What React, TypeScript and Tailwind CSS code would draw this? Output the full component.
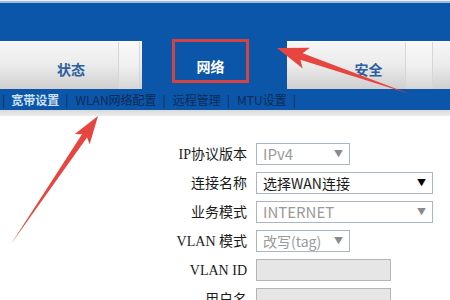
function arrowPoints(tx: number, ty: number, px: number, py: number, headLen: number, headW: number, neckW: number, notch: number) {
  const dx = px - tx;
  const dy = py - ty;
  const len = Math.hypot(dx, dy);
  const ux = dx / len;
  const uy = dy / len;
  const nx = -uy;
  const ny = ux;
  const bx = px - ux * headLen;
  const by = py - uy * headLen;
  const wx = bx - ux * notch;
  const wy = by - uy * notch;
  const pts = [
    [px, py],
    [wx + nx * headW, wy + ny * headW],
    [bx + nx * neckW, by + ny * neckW],
    [tx, ty],
    [bx - nx * neckW, by - ny * neckW],
    [wx - nx * headW, wy - ny * headW],
  ];
  return pts.map((p) => p.map((v) => v.toFixed(1)).join(",")).join(" ");
}

function Tab({ label, className, bandClass }: { label: string; className: string; bandClass: string }) {
  return (
    <div
      className={`relative flex h-full items-center justify-center border-t border-white bg-gradient-to-b from-[#f6f6f6] via-[#ebebeb] to-[#cfcfcf] pt-[8px] ${className}`}
    >
      <div className={`absolute top-0 h-full border-x border-x-[#d6d6d6] bg-gradient-to-b from-[#f9f9f9] via-[#f0f0f0] to-[#d6d6d6] ${bandClass}`} />
      <span className="relative text-[14px] font-bold text-[#2d5f9e]">{label}</span>
    </div>
  );
}

function Caret({ dark }: { dark?: boolean }) {
  return (
    <span className={`text-[9px] ${dark ? "text-black" : "text-[#8a8a8a]"}`}>▼</span>
  );
}

function Row({ label, children }: { label: string; children: React.ReactNode }) {
  return (
    <div className="flex h-[22px] items-center">
      <div className="w-[248px] pr-[1px] text-right text-[14px] text-[#1a1a1a] [font-family:'Liberation_Serif','Noto_Sans_CJK_SC',serif]">
        {label}
      </div>
      <div className="ml-[8px] flex h-full">{children}</div>
    </div>
  );
}

export default function App() {
  const nav = ["WLAN网络配置", "远程管理", "MTU设置"];
  return (
    <div className="relative h-[300px] w-[450px] overflow-hidden bg-white [font-family:'Noto_Sans_CJK_SC',sans-serif]">
      <div className="h-[1px] bg-[#eef2f6]" />
      <div className="h-[2px] bg-[#9dbde0]" />
      <div className="flex h-[86px] flex-col justify-end bg-[#0b56a8]">
        <div className="flex h-[48px] items-start">
          <Tab label="状态" className="w-[142px]" bandClass="left-[118px] w-[22px]" />
          <div className="ml-[30px] mt-[-2px] flex h-[44px] w-[77px] items-center justify-center border-[3px] border-[#d4433f] pt-[10px]">
            <span className="text-[14px] font-bold text-white">网络</span>
          </div>
          <Tab label="安全" className="ml-[38px] flex-1" bandClass="left-[118px] w-[28px]" />
        </div>
      </div>
      <div className="flex h-[21px] items-center gap-[6px] bg-[#0b56a8] pl-[2px] text-[12px] text-[#0d2b57]">
        <span>|</span>
        <span className="font-bold text-[#cfe0f3]">宽带设置</span>
        {nav.map((n) => (
          <span key={n} className="flex gap-[7px]">
            <span>|</span>
            <span>{n}</span>
          </span>
        ))}
        <span>|</span>
      </div>
      <div className="h-[6px] bg-gradient-to-b from-[#d9d9d9] to-[#eeeeee]" />

      <div className="mt-[27px] flex flex-col gap-[7px]">
        <Row label="IP协议版本">
          <div className="flex w-[94px] items-center justify-between border border-[#a9b6c4] px-[6px] text-[15px] text-[#9a9a9a]">
            <span>IPv4</span>
            <Caret />
          </div>
        </Row>
        <Row label="连接名称">
          <div className="flex w-[177px] items-center justify-between border border-[#a9b6c4] px-[6px] text-[14px] text-[#1a1a1a]">
            <span>选择WAN连接</span>
            <Caret dark />
          </div>
        </Row>
        <Row label="业务模式">
          <div className="flex w-[177px] items-center justify-between border border-[#a9b6c4] px-[6px] text-[15px] text-[#9a9a9a]">
            <span>INTERNET</span>
            <Caret />
          </div>
        </Row>
        <Row label="VLAN 模式">
          <div className="flex w-[94px] items-center justify-between border border-[#a9b6c4] px-[6px] text-[14px] text-[#9a9a9a]">
            <span>改写(tag)</span>
            <Caret />
          </div>
        </Row>
        <Row label="VLAN ID">
          <div className="w-[135px] border border-[#b4b4b4] bg-[#e6e6e6]" />
        </Row>
        <Row label="用户名">
          <div className="w-[135px] border border-[#b4b4b4] bg-[#e6e6e6]" />
        </Row>
      </div>

      <svg className="pointer-events-none absolute left-0 top-0" width="450" height="300" viewBox="0 0 450 300">
        <polygon points={arrowPoints(11, 244, 98, 116, 24, 9, 3, 4)} fill="#e6463f" />
        <polygon points={arrowPoints(410, 94, 277, 48, 26, 11, 3.5, 5)} fill="#e6463f" />
      </svg>
    </div>
  );
}
